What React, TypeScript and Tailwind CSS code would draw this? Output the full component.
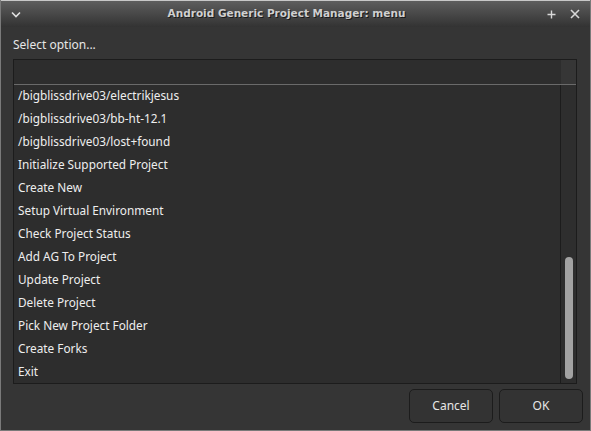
import React from "react";

const items = [
  "/bigblissdrive03/electrikjesus",
  "/bigblissdrive03/bb-ht-12.1",
  "/bigblissdrive03/lost+found",
  "Initialize Supported Project",
  "Create New",
  "Setup Virtual Environment",
  "Check Project Status",
  "Add AG To Project",
  "Update Project",
  "Delete Project",
  "Pick New Project Folder",
  "Create Forks",
  "Exit",
];

export default function App() {
  return (
    <div
      className="w-[591px] h-[431px] bg-[#353535] flex flex-col overflow-hidden border-l border-r border-b border-[#7a7a7a]"
      style={{ fontFamily: '"Noto Sans", sans-serif' }}
    >
      {/* title bar */}
      <div className="h-[27px] shrink-0 flex items-center relative bg-gradient-to-b from-[#5e5e5e] to-[#333333] border-t border-[#c8c8c8]">
        <div className="w-[30px] flex justify-center">
          <svg width="10" height="7" viewBox="0 0 10 7">
            <path d="M1 1.5 L5 5.5 L9 1.5" stroke="#e0e0e0" strokeWidth="1.6" fill="none" />
          </svg>
        </div>
        <div
          className="flex-1 text-center text-[10.5px] font-bold text-[#d0d0d0] pr-[5px]"
          style={{ fontFamily: '"DejaVu Sans", sans-serif', textShadow: "1px 1px 0 #1a1a1a" }}
        >
          Android Generic Project Manager: menu
        </div>
        <div className="flex items-center gap-[14px] pr-[10px]">
          <svg width="9" height="9" viewBox="0 0 9 9">
            <path d="M4.5 0.5 V8.5 M0.5 4.5 H8.5" stroke="#d8d8d8" strokeWidth="1.4" />
          </svg>
          <svg width="10" height="10" viewBox="0 0 10 10">
            <path d="M1 1 L9 9 M9 1 L1 9" stroke="#d8d8d8" strokeWidth="1.6" />
          </svg>
        </div>
      </div>

      {/* body */}
      <div className="flex-1 flex flex-col px-[12px]">
        <div className="h-[32px] flex items-center text-[12px] text-[#e6e6e6] pt-[3px]">
          Select option...
        </div>
        <div className="h-[325px] border border-[#1c1c1c] bg-[#2d2d2d] flex flex-col mr-[1px]">
          <div className="h-[25px] shrink-0 flex border-b border-[#6a6a6a]">
            <div className="flex-1" />
            <div className="w-[15px] bg-[#363636]" />
          </div>
          <div className="flex-1 flex">
            <div className="flex-1 flex flex-col pl-[4px] -mt-[1px]">
              {items.map((t) => (
                <div key={t} className="h-[23px] flex items-center text-[11.8px] text-[#eeeeee]">
                  {t}
                </div>
              ))}
            </div>
            <div className="w-[16px] border-l border-[#1c1c1c] bg-[#2e2e2e] flex flex-col justify-end items-center pb-[4px]">
              <div className="w-[8px] h-[122px] rounded-full bg-[#a3a3a3]" />
            </div>
          </div>
        </div>
        <div className="flex justify-end gap-[6px] pt-[5px] mr-[-5px]">
          <button className="w-[84px] h-[34px] rounded-[5px] border border-[#1c1c1c] bg-[#333333] text-[12px] text-[#e6e6e6]">
            Cancel
          </button>
          <button className="w-[84px] h-[34px] rounded-[5px] border border-[#1c1c1c] bg-[#333333] text-[12px] text-[#e6e6e6]">
            OK
          </button>
        </div>
      </div>
    </div>
  );
}
